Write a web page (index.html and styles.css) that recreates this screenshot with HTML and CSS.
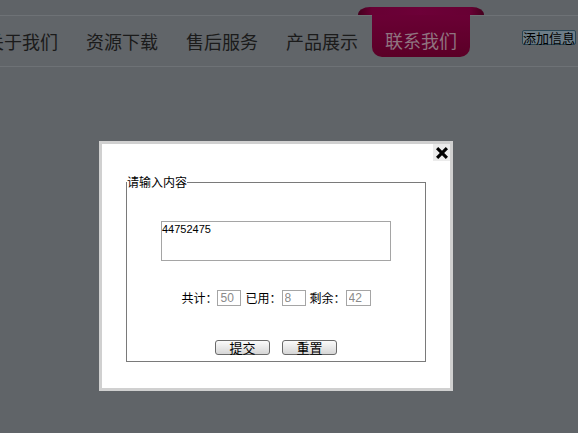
FILE: index.html
```html
<!DOCTYPE html>
<html lang="zh-CN">
<head>
<meta charset="utf-8">
<title>联系我们</title>
<link rel="stylesheet" href="styles.css">
</head>
<body>
<div class="page">
  <div class="topbar"></div>
  <div class="nav">
    <ul class="menu">
      <li>关于我们</li>
      <li>资源下载</li>
      <li>售后服务</li>
      <li>产品展示</li>
      <li class="active">联系我们</li>
    </ul>
    <button class="add-btn" type="button">添加信息</button>
  </div>
</div>
<div class="mask"></div>
<div class="dialog">
  <button class="close" type="button" aria-label="关闭">
    <svg width="12" height="12" viewBox="0 0 12 12"><path d="M2.2 0 L6 3.8 L9.8 0 L12 2.2 L8.2 6 L12 9.8 L9.8 12 L6 8.2 L2.2 12 L0 9.8 L3.8 6 L0 2.2 Z" fill="#000"/></svg>
  </button>
  <form class="form">
    <fieldset class="box">
      <legend class="box-title">请输入内容</legend>
      <textarea class="content">44752475</textarea>
      <div class="counter"><span class="lbl">共计：</span><input class="num" value="50" readonly><span class="lbl">已用：</span><input class="num" value="8" readonly><span class="lbl">剩余：</span><input class="num last" value="42" readonly></div>
      <div class="actions"><button class="btn" type="button">提交</button><button class="btn" type="reset">重置</button></div>
    </fieldset>
  </form>
</div>
</body>
</html>
```
FILE: styles.css
```css
html, body {
  margin: 0;
  height: 100%;
}
body {
  background: #949aa0;
  font-family: "Noto Sans CJK SC", "Liberation Sans", sans-serif;
  overflow: hidden;
}
.topbar {
  height: 15px;
  background: #92989e;
  border-bottom: 1px solid #a9afb5;
}
.nav {
  height: 50px;
  display: flex;
  background: #959ba1;
  border-bottom: 1px solid #a9afb5;
}
.menu {
  list-style: none;
  margin: 0 0 0 -28px;
  padding: 0;
  display: flex;
}
.menu li {
  width: 100px;
  text-align: center;
  font-size: 18px;
  line-height: 50px;
  color: #2a2a2a;
}
.menu li.active {
  position: relative;
  width: 98px;
  margin: -9px 2px 0 0;
  height: 50px;
  box-sizing: border-box;
  padding-top: 8px;
  background: linear-gradient(#a80056, #8c003c);
  border-radius: 0 0 10px 10px;
  color: #dcb2c4;
}
.menu li.active::before {
  content: "";
  position: absolute;
  top: 0;
  left: -14px;
  right: -14px;
  height: 8px;
  background: linear-gradient(90deg, #6a002e, #a00050 11%, #a80056 50%, #a00050 89%, #6a002e);
  border-radius: 12px 12px 0 0 / 8px 8px 0 0;
}
.add-btn {
  margin: 14px 2px 0 auto;
  align-self: flex-start;
  width: 54px;
  height: 15px;
  padding: 0;
  font-family: "Noto Sans CJK SC", sans-serif;
  font-size: 13px;
  line-height: 13px;
  color: #000;
  background: #a8c0d0;
  border: 1px solid #3f6a82;
  border-radius: 2px;
}
.mask {
  position: fixed;
  inset: 0;
  background: rgba(0, 0, 0, 0.35);
}
.dialog {
  position: absolute;
  left: 99px;
  top: 141px;
  width: 300px;
  height: 244px;
  padding: 0 24px;
  background: #fff;
  border: 3px solid #d0d0d0;
}
.close {
  position: absolute;
  top: 0;
  right: 0;
  width: 17px;
  height: 17px;
  padding: 0;
  border: 0;
  background: #ebebeb;
  display: flex;
  align-items: center;
  justify-content: center;
}
.form {
  margin: 0;
}
.box {
  margin: 30px 0 0;
  padding: 0 0 6px;
  border: 1px solid #7a7a7a;
  text-align: left;
}
.box-title {
  padding: 0;
  margin: 0 auto 0 0;
  font-size: 12px;
  line-height: 16px;
  color: #000;
}
.content {
  display: block;
  box-sizing: border-box;
  width: 230px;
  height: 40px;
  margin: 31px auto 0;
  padding: 1px 0 0 0;
  border: 1px solid #a5a5a5;
  font-family: "Liberation Sans", sans-serif;
  font-size: 11px;
  line-height: 13px;
  color: #000;
  resize: none;
}
.counter {
  margin-top: 29px;
  height: 16px;
  display: flex;
  justify-content: center;
  align-items: center;
  font-size: 12px;
  color: #000;
}
.lbl {
  line-height: 16px;
}
.num {
  box-sizing: border-box;
  width: 24px;
  height: 16px;
  margin: 0 4px 0 0;
  padding: 0 2px;
  border: 1px solid #a5a5a5;
  font-family: "Liberation Sans", sans-serif;
  font-size: 12px;
  color: #8a8a8a;
}
.num.last {
  width: 25px;
  margin-right: 0;
}
.actions {
  margin-top: 34px;
  display: flex;
  justify-content: center;
  gap: 12px;
}
.btn {
  box-sizing: border-box;
  width: 55px;
  height: 15px;
  padding: 0;
  font-family: "Noto Sans CJK SC", sans-serif;
  font-size: 13px;
  line-height: 13px;
  color: #000;
  background: linear-gradient(#fbfbfb, #d6d6d6);
  border: 1px solid #6a6a6a;
  border-radius: 3px;
}
```
